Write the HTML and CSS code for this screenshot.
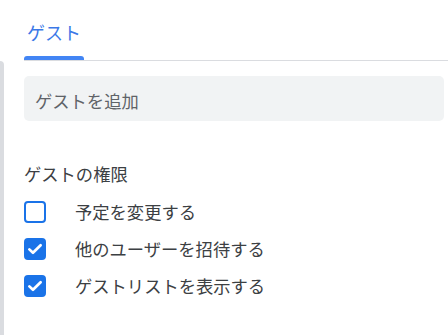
FILE: index.html
```html
<!DOCTYPE html>
<html lang="ja">
<head>
    <meta charset="UTF-8">
    <meta name="viewport" content="width=device-width, initial-scale=1.0">
    <title>ゲスト</title>
    <link rel="stylesheet" href="styles.css">
</head>
<body>
    <div class="layout">
        <div class="edge"></div>

        <main class="panel">
            <!-- タブ -->
            <div class="tabs">
                <div class="tab active">ゲスト</div>
            </div>

            <div class="guest-input">ゲストを追加</div>

            <!-- ゲストの権限 -->
            <section class="permissions">
                <h3>ゲストの権限</h3>
                <label class="perm">
                    <span class="box"></span>
                    <span>予定を変更する</span>
                </label>
                <label class="perm">
                    <span class="box checked">
                        <svg viewBox="0 0 24 24" width="18" height="18"><path d="M4.5 12.5l4.8 4.6L19.5 7" fill="none" stroke="#fff" stroke-width="3.6" stroke-linecap="round" stroke-linejoin="round"/></svg>
                    </span>
                    <span>他のユーザーを招待する</span>
                </label>
                <label class="perm">
                    <span class="box checked">
                        <svg viewBox="0 0 24 24" width="18" height="18"><path d="M4.5 12.5l4.8 4.6L19.5 7" fill="none" stroke="#fff" stroke-width="3.6" stroke-linecap="round" stroke-linejoin="round"/></svg>
                    </span>
                    <span>ゲストリストを表示する</span>
                </label>
            </section>
        </main>
    </div>
</body>
</html>
```

FILE: styles.css
```css
body, html {
    margin: 0;
    padding: 0;
    height: 100%;
    background: #fff;
    font-family: 'Noto Sans CJK JP', 'Noto Sans', sans-serif;
    color: #3c4043;
    overflow: hidden;
}

.layout {
    display: flex;
    height: 100%;
}

/* 左端のグレーのバー */
.edge {
    width: 4px;
    margin-top: 61px;
    background: #dadce0;
    border-radius: 0 4px 0 0;
}

.panel {
    flex: 1;
    padding-left: 20px;
}

/* タブ */
.tabs {
    display: flex;
    border-bottom: 1px solid #dadce0;
}

.tab {
    width: 60px;
    text-align: center;
    font-size: 18px;
    line-height: 24px;
    padding: 20px 0 16px;
    color: #3b78e7;
    position: relative;
}

.tab.active::after {
    content: '';
    position: absolute;
    left: 0;
    right: 0;
    bottom: 0;
    height: 4px;
    background: #4285f4;
    border-radius: 3px 3px 0 0;
}

/* 入力欄 */
.guest-input {
    margin: 15px 4px 0 0;
    height: 45px;
    line-height: 49px;
    padding-left: 11px;
    background: #f1f3f4;
    border-radius: 5px;
    font-size: 17.3px;
    color: #5f6368;
    box-sizing: border-box;
}

/* 権限 */
.permissions h3 {
    margin: 41px 0 7px;
    font-size: 17.3px;
    font-weight: normal;
    line-height: 24px;
}

.perm {
    display: flex;
    align-items: center;
    height: 37px;
    font-size: 17.3px;
}

.box {
    width: 22px;
    height: 22px;
    box-sizing: border-box;
    border: 2px solid #1a73e8;
    border-radius: 4px;
    margin-right: 29px;
    display: flex;
    align-items: center;
    justify-content: center;
}

.box.checked {
    background: #1a73e8;
}
```
